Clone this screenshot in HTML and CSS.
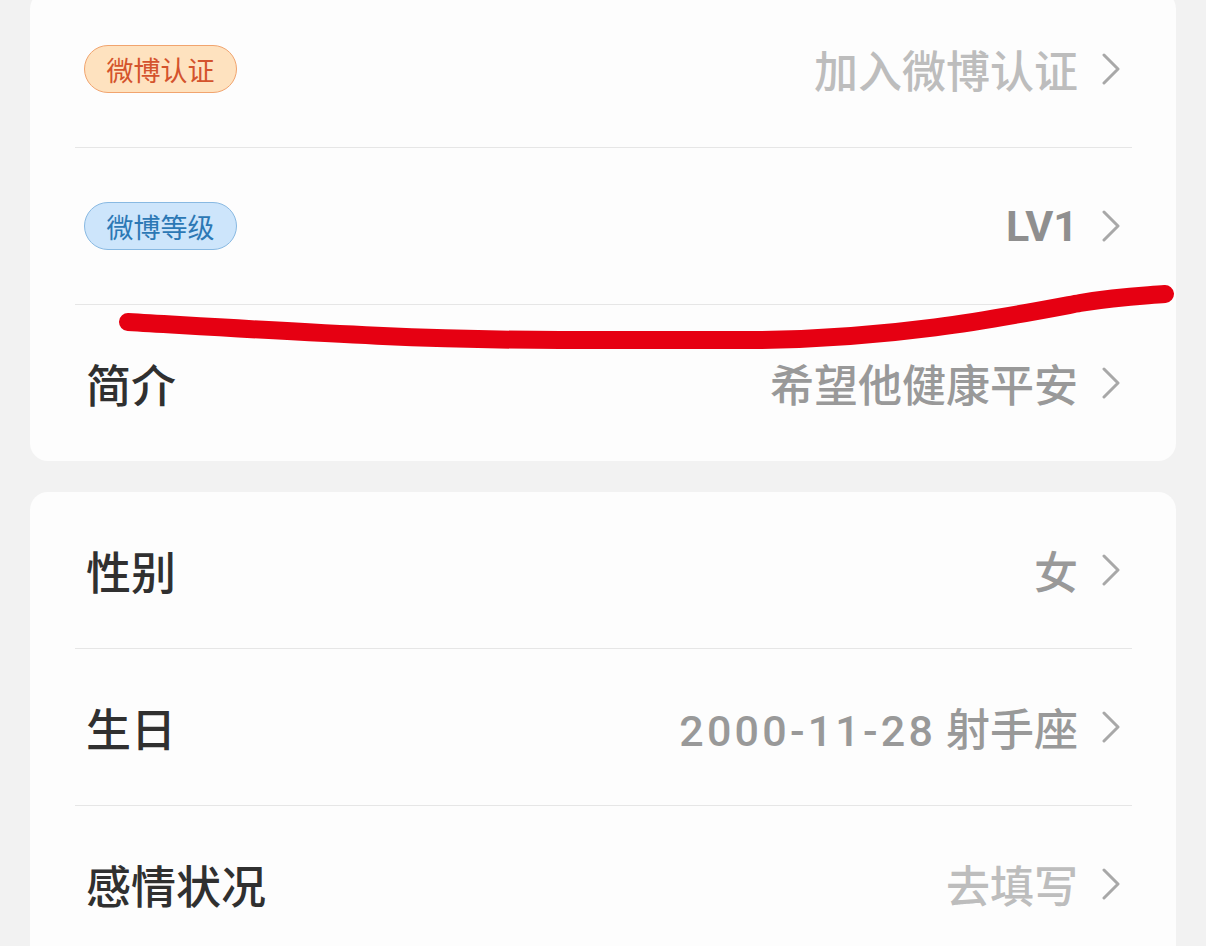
FILE: index.html
```html
<!DOCTYPE html>
<html lang="zh-CN">
<head>
<meta charset="utf-8">
<title>编辑资料</title>
<link rel="stylesheet" href="styles.css">
</head>
<body>
<div class="page">
  <div class="card card-first">
    <div class="row">
      <span class="badge badge-orange">微博认证</span>
      <span class="value value-light">加入微博认证</span>
      <svg class="chev" viewBox="0 0 18 32"><polyline points="2,2 16,16 2,30"/></svg>
    </div>
    <div class="row">
      <span class="badge badge-blue">微博等级</span>
      <span class="value value-lv">LV1</span>
      <svg class="chev" viewBox="0 0 18 32"><polyline points="2,2 16,16 2,30"/></svg>
    </div>
    <div class="row">
      <span class="label">简介</span>
      <span class="value">希望他健康平安</span>
      <svg class="chev" viewBox="0 0 18 32"><polyline points="2,2 16,16 2,30"/></svg>
    </div>
  </div>
  <div class="card">
    <div class="row">
      <span class="label">性别</span>
      <span class="value">女</span>
      <svg class="chev" viewBox="0 0 18 32"><polyline points="2,2 16,16 2,30"/></svg>
    </div>
    <div class="row">
      <span class="label">生日</span>
      <span class="value"><span class="num">2000-11-28</span> 射手座</span>
      <svg class="chev" viewBox="0 0 18 32"><polyline points="2,2 16,16 2,30"/></svg>
    </div>
    <div class="row">
      <span class="label">感情状况</span>
      <span class="value value-light">去填写</span>
      <svg class="chev" viewBox="0 0 18 32"><polyline points="2,2 16,16 2,30"/></svg>
    </div>
  </div>
</div>
<svg class="scribble" viewBox="0 0 1206 946" width="1206" height="946">
  <path d="M128 322 C 300 332, 420 340, 560 340 L 760 340 C 900 338, 1000 318, 1080 303 C 1120 296, 1140 296, 1165 294"/>
</svg>
</body>
</html>
```

FILE: styles.css
```css
html, body {
  margin: 0;
  padding: 0;
  background: #f2f2f2;
  height: 946px;
  overflow: hidden;
}

body {
  position: relative;
  font-family: "Noto Sans CJK SC", "Noto Sans", sans-serif;
}

.page {
  padding: 0 30px;
  display: flex;
  flex-direction: column;
  gap: 31px;
}

.card {
  background: #fdfdfd;
  border-radius: 18px;
  padding: 0 44px 0 45px;
}

.card-first {
  margin-top: -9px;
}

.row {
  height: 156px;
  border-bottom: 1px solid #e6e6e6;
  display: flex;
  align-items: center;
  padding: 0 12px 0 11px;
}

.row:last-child {
  border-bottom: none;
}

.label {
  font-size: 45px;
  font-weight: 500;
  color: #303030;
}

.badge {
  width: 153px;
  height: 48px;
  box-sizing: border-box;
  border-radius: 24px;
  display: inline-flex;
  align-items: center;
  justify-content: center;
  font-size: 27px;
  margin-left: -2px;
}

.badge-orange {
  background: #fee2bf;
  border: 1.5px solid #f1a46e;
  color: #d4532c;
}

.badge-blue {
  background: #cde5fb;
  border: 1.5px solid #88b9e2;
  color: #2c78b5;
}

.value {
  margin-left: auto;
  font-size: 44px;
  font-weight: 500;
  color: #999999;
}

.value-light {
  color: #bdbdbd;
}

.value-lv {
  font-family: Roboto, "Noto Sans", sans-serif;
  font-weight: 700;
  font-size: 43px;
  color: #8f8f8f;
}

.num {
  font-family: Roboto, "Noto Sans", sans-serif;
  font-size: 43px;
  letter-spacing: 3.2px;
}

.chev {
  width: 18px;
  height: 32px;
  margin-left: 24px;
  flex: none;
}

.chev polyline {
  fill: none;
  stroke: #a8a8a8;
  stroke-width: 3;
  stroke-linecap: round;
  stroke-linejoin: round;
}

.scribble {
  position: absolute;
  left: 0;
  top: 0;
  pointer-events: none;
}

.scribble path {
  fill: none;
  stroke: #e60012;
  stroke-width: 18;
  stroke-linecap: round;
}
```
